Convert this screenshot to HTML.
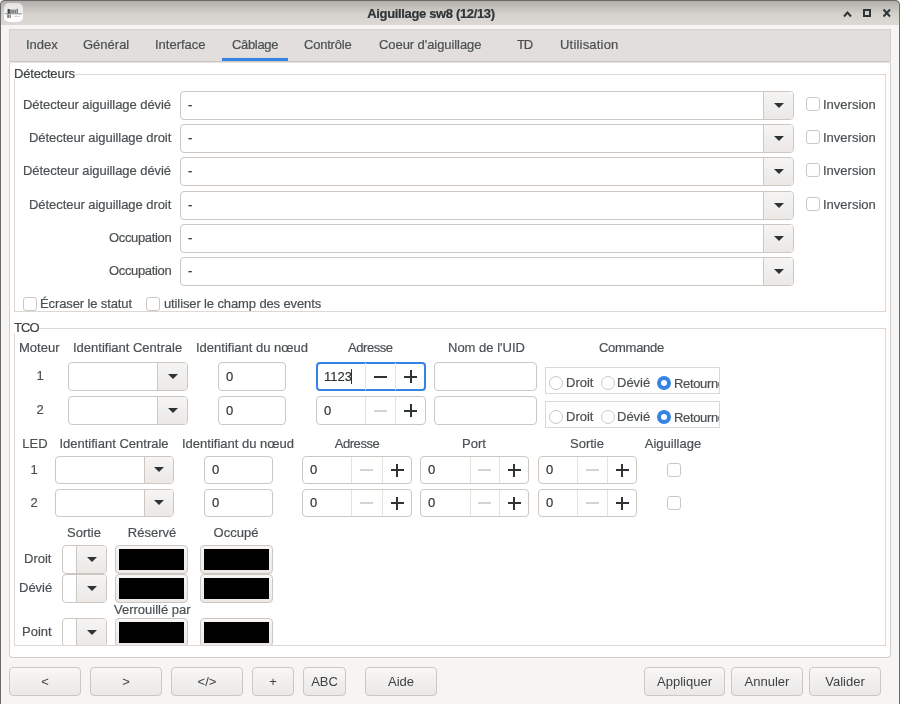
<!DOCTYPE html>
<html><head><meta charset="utf-8">
<style>
*{box-sizing:border-box;margin:0;padding:0}
html,body{width:900px;height:704px;overflow:hidden;background:#f6f5f4;font-family:"Liberation Sans",sans-serif;position:relative}
.a{position:absolute}
.t{position:absolute;white-space:nowrap;font-size:13px;line-height:16px;color:#3d4244;will-change:transform;-webkit-text-stroke:0.2px}
.gb{position:absolute;border:1px solid #ddd8d4}
.gbl{position:absolute;background:#fff;font-size:13px;will-change:transform;line-height:16px;color:#3d4244;white-space:nowrap}
.combo{position:absolute;background:#fff;border:1px solid #cdc7c2;border-radius:4px;overflow:hidden}
.combo .btn{position:absolute;right:0;top:0;bottom:0;border-left:1px solid #cdc7c2;background:linear-gradient(#f6f5f4,#ebe8e6)}
.arr{position:absolute;left:50%;top:50%;width:0;height:0;margin-left:-5px;margin-top:-3px;border-left:5px solid transparent;border-right:5px solid transparent;border-top:5px solid #2e3436}
.tf{position:absolute;background:#fff;border:1px solid #cdc7c2;border-radius:4px}
.cb{position:absolute;background:#fff;border:1px solid #cdc7c2;border-radius:3px}
.spin{position:absolute;background:#fff;border:1px solid #cdc7c2;border-radius:4px}
.btnb{position:absolute;border:1px solid #cdc7c2;border-radius:4px;background:linear-gradient(#f8f7f6,#ebe8e6);font-size:13px;will-change:transform;color:#3d4244;text-align:center;line-height:27px;white-space:nowrap}
.blk{position:absolute;border:1px solid #cdc7c2;border-radius:4px;background:linear-gradient(#f8f7f6,#ebe8e6)}
.blk i{position:absolute;left:3px;top:3px;right:3px;bottom:3px;background:#000}
</style></head><body>

<div class="a" style="left:0;top:0;width:900px;height:25px;background:linear-gradient(#b1aeaa 1px,#d5d2ce 14px,#dcd9d5 25px);border-radius:5px 5px 0 0"></div>
<div class="a" style="left:0;top:0;width:900px;height:704px;border:1px solid #6b6865;border-bottom:none;border-radius:5px 5px 0 0"></div>
<div class="a" style="left:4px;top:3px;width:19px;height:19px;border-radius:5px;background:linear-gradient(#e2e2e2,#f2f2f2 55%,#fff 58%)"></div>
<svg class="a" style="left:0;top:0" width="30" height="30" viewBox="0 0 30 30"><g fill="#222"><rect x="7.6" y="9" width="2.2" height="4.6" opacity="0.85"/><rect x="10.2" y="9.6" width="1.6" height="3.6" opacity="0.6"/><rect x="12.2" y="9.6" width="1.8" height="3.6" opacity="0.55"/><rect x="14.4" y="9.6" width="1.8" height="3.6" opacity="0.55"/><rect x="16.6" y="8.8" width="1.3" height="4.4" opacity="0.6"/><rect x="4.6" y="13.4" width="17.6" height="0.9" opacity="0.55"/><rect x="7.4" y="14.6" width="1.3" height="3.4" opacity="0.8"/><rect x="9.6" y="14.6" width="1.1" height="3.4" opacity="0.7"/><rect x="13.8" y="15.9" width="6" height="0.7" opacity="0.3"/></g></svg>
<div class="t" style="left:231px;width:400px;text-align:center;top:5.5px;font-size:13px;color:#2e3436;font-weight:bold;letter-spacing:-0.35px">Aiguillage sw8 (12/13)</div>
<svg class="a" style="left:840px;top:6px" width="54" height="14" viewBox="0 0 54 14"><path d="M4 10.5 L7.5 6.5 L11 10.5" fill="none" stroke="#2e3436" stroke-width="2"/><rect x="24" y="4" width="6" height="6" fill="none" stroke="#2e3436" stroke-width="2"/><path d="M43.5 3.5 L50 10.5 M50 3.5 L43.5 10.5" fill="none" stroke="#2e3436" stroke-width="2"/></svg>
<div class="a" style="left:9px;top:29px;width:882px;height:33px;background:#e1dedb;border:1px solid #d5d0cc;border-bottom-color:#cdc7c2"></div>
<div class="t" style="left:25.9px;top:36.5px;font-size:13px;color:#4b5053;font-weight:normal;letter-spacing:0px">Index</div>
<div class="t" style="left:83.4px;top:36.5px;font-size:13px;color:#4b5053;font-weight:normal;letter-spacing:0px">Général</div>
<div class="t" style="left:154.9px;top:36.5px;font-size:13px;color:#4b5053;font-weight:normal;letter-spacing:0px">Interface</div>
<div class="t" style="left:231.9px;top:36.5px;font-size:13px;color:#4b5053;font-weight:normal;letter-spacing:-0.33px">Câblage</div>
<div class="t" style="left:304.4px;top:36.5px;font-size:13px;color:#4b5053;font-weight:normal;letter-spacing:-0.21px">Contrôle</div>
<div class="t" style="left:378.7px;top:36.5px;font-size:13px;color:#4b5053;font-weight:normal;letter-spacing:-0.07px">Coeur d'aiguillage</div>
<div class="t" style="left:517.1px;top:36.5px;font-size:13px;color:#4b5053;font-weight:normal;letter-spacing:-1.2px">TD</div>
<div class="t" style="left:560.1px;top:36.5px;font-size:13px;color:#4b5053;font-weight:normal;letter-spacing:0.2px">Utilisation</div>
<div class="a" style="left:222px;top:58px;width:66px;height:3px;background:#3584e4"></div>
<div class="a" style="left:9px;top:62px;width:882px;height:596px;background:#fff;border:1px solid #d3cec9;border-top-color:#e6e2de;border-radius:3px 3px 4px 4px"></div>
<div class="gb" style="left:14px;top:74px;width:872px;height:238px"></div>
<div class="a" style="left:13px;top:66px;height:13px;background:#fff;overflow:visible"><div class="t" style="position:relative;left:0.9px;top:0;letter-spacing:-0.2px;padding-right:1px">Détecteurs</div></div>
<div class="combo" style="left:180px;top:91px;width:614px;height:29px"><div class="btn" style="width:30px"><div class="arr"></div></div></div>
<div class="t" style="left:188.4px;top:97.0px;font-size:13px;color:#2e3436;font-weight:normal;">-</div>
<div class="t" style="right:729px;top:96.5px;font-size:13px;color:#4b5053;font-weight:normal;letter-spacing:-0.06px">Détecteur aiguillage dévié</div>
<div class="cb" style="left:806px;top:97px;width:14px;height:14px"></div>
<div class="t" style="left:822.9px;top:96.5px;font-size:13px;color:#4b5053;font-weight:normal;">Inversion</div>
<div class="combo" style="left:180px;top:124px;width:614px;height:29px"><div class="btn" style="width:30px"><div class="arr"></div></div></div>
<div class="t" style="left:188.4px;top:130.0px;font-size:13px;color:#2e3436;font-weight:normal;">-</div>
<div class="t" style="right:729px;top:129.5px;font-size:13px;color:#4b5053;font-weight:normal;letter-spacing:-0.06px">Détecteur aiguillage droit</div>
<div class="cb" style="left:806px;top:130px;width:14px;height:14px"></div>
<div class="t" style="left:822.9px;top:129.5px;font-size:13px;color:#4b5053;font-weight:normal;">Inversion</div>
<div class="combo" style="left:180px;top:157px;width:614px;height:29px"><div class="btn" style="width:30px"><div class="arr"></div></div></div>
<div class="t" style="left:188.4px;top:163.0px;font-size:13px;color:#2e3436;font-weight:normal;">-</div>
<div class="t" style="right:729px;top:162.5px;font-size:13px;color:#4b5053;font-weight:normal;letter-spacing:-0.06px">Détecteur aiguillage dévié</div>
<div class="cb" style="left:806px;top:163px;width:14px;height:14px"></div>
<div class="t" style="left:822.9px;top:162.5px;font-size:13px;color:#4b5053;font-weight:normal;">Inversion</div>
<div class="combo" style="left:180px;top:191px;width:614px;height:29px"><div class="btn" style="width:30px"><div class="arr"></div></div></div>
<div class="t" style="left:188.4px;top:197.0px;font-size:13px;color:#2e3436;font-weight:normal;">-</div>
<div class="t" style="right:729px;top:196.5px;font-size:13px;color:#4b5053;font-weight:normal;letter-spacing:-0.06px">Détecteur aiguillage droit</div>
<div class="cb" style="left:806px;top:197px;width:14px;height:14px"></div>
<div class="t" style="left:822.9px;top:196.5px;font-size:13px;color:#4b5053;font-weight:normal;">Inversion</div>
<div class="combo" style="left:180px;top:224px;width:614px;height:29px"><div class="btn" style="width:30px"><div class="arr"></div></div></div>
<div class="t" style="left:188.4px;top:230.0px;font-size:13px;color:#2e3436;font-weight:normal;">-</div>
<div class="t" style="right:729px;top:229.5px;font-size:13px;color:#4b5053;font-weight:normal;letter-spacing:-0.35px">Occupation</div>
<div class="combo" style="left:180px;top:257px;width:614px;height:29px"><div class="btn" style="width:30px"><div class="arr"></div></div></div>
<div class="t" style="left:188.4px;top:263.0px;font-size:13px;color:#2e3436;font-weight:normal;">-</div>
<div class="t" style="right:729px;top:262.5px;font-size:13px;color:#4b5053;font-weight:normal;letter-spacing:-0.35px">Occupation</div>
<div class="cb" style="left:23px;top:297px;width:14px;height:14px"></div>
<div class="t" style="left:40.4px;top:296.0px;font-size:13px;color:#4b5053;font-weight:normal;letter-spacing:-0.12px">Écraser le statut</div>
<div class="cb" style="left:146px;top:297px;width:14px;height:14px"></div>
<div class="t" style="left:163.6px;top:296.0px;font-size:13px;color:#4b5053;font-weight:normal;letter-spacing:-0.12px">utiliser le champ des events</div>
<div class="gb" style="left:14px;top:328px;width:872px;height:318px"></div>
<div class="a" style="left:13px;top:320px;height:13px;background:#fff;overflow:visible"><div class="t" style="position:relative;left:1.4px;top:0;letter-spacing:-0.9px;padding-right:1px">TCO</div></div>
<div class="t" style="left:19.0px;top:339.5px;font-size:13px;color:#4b5053;font-weight:normal;letter-spacing:0px">Moteur</div>
<div class="t" style="left:73.10000000000001px;top:339.5px;font-size:13px;color:#4b5053;font-weight:normal;letter-spacing:0px">Identifiant Centrale</div>
<div class="t" style="left:196.1px;top:339.5px;font-size:13px;color:#4b5053;font-weight:normal;letter-spacing:0px">Identifiant du nœud</div>
<div class="t" style="left:347.7px;top:339.5px;font-size:13px;color:#4b5053;font-weight:normal;letter-spacing:-0.45px">Adresse</div>
<div class="t" style="left:447.7px;top:339.5px;font-size:13px;color:#4b5053;font-weight:normal;letter-spacing:0px">Nom de l'UID</div>
<div class="t" style="left:599.4px;top:339.5px;font-size:13px;color:#4b5053;font-weight:normal;letter-spacing:-0.28px">Commande</div>
<div class="t" style="left:-160.5px;width:400px;text-align:center;top:367.5px;font-size:13px;color:#4b5053;font-weight:normal;">1</div>
<div class="combo" style="left:68px;top:362px;width:120px;height:29px"><div class="btn" style="width:30px"><div class="arr"></div></div></div>
<div class="tf" style="left:218px;top:362px;width:68px;height:29px"></div>
<div class="t" style="left:226.4px;top:368.5px;font-size:13px;color:#2e3436;font-weight:normal;">0</div>
<div class="spin" style="left:316px;top:362px;width:110px;height:29px;border:2px solid #3584e4;"></div>
<div class="a" style="left:365px;top:363px;width:1px;height:27px;background:#e6e2de"></div>
<div class="a" style="left:395px;top:363px;width:1px;height:27px;background:#e6e2de"></div>
<div class="a" style="left:373.5px;top:375.5px;width:13px;height:2px;background:#2e3436"></div>
<div class="a" style="left:404.0px;top:375.5px;width:13px;height:2px;background:#2e3436"></div>
<div class="a" style="left:409.5px;top:370.0px;width:2px;height:13px;background:#2e3436"></div>
<div class="t" style="left:324.4px;top:368.5px;font-size:13px;color:#2e3436;font-weight:normal;">1123</div>
<div class="tf" style="left:434px;top:362px;width:103px;height:29px"></div>
<div class="a" style="left:545px;top:367px;width:175px;height:27px;border:1px solid #ddd8d4;overflow:hidden"></div>
<div class="a" style="left:549px;top:376px;width:14px;height:14px;border-radius:50%;border:1px solid #cdc7c2;background:#fff"></div>
<div class="t" style="left:565.6px;top:375.0px;font-size:13px;color:#4b5053;font-weight:normal;">Droit</div>
<div class="a" style="left:601px;top:376px;width:14px;height:14px;border-radius:50%;border:1px solid #cdc7c2;background:#fff"></div>
<div class="t" style="left:617.4px;top:375.0px;font-size:13px;color:#4b5053;font-weight:normal;">Dévié</div>
<div class="a" style="left:657px;top:376px;width:14px;height:14px;border-radius:50%;border:4px solid #3584e4;background:#fff"></div>
<div class="a" style="left:674px;top:367px;width:45px;height:27px;overflow:hidden"><div class="t" style="left:0;top:8.5px;color:#4b5053;letter-spacing:-0.35px">Retourné</div></div>
<div class="t" style="left:-160.5px;width:400px;text-align:center;top:401.5px;font-size:13px;color:#4b5053;font-weight:normal;">2</div>
<div class="combo" style="left:68px;top:396px;width:120px;height:29px"><div class="btn" style="width:30px"><div class="arr"></div></div></div>
<div class="tf" style="left:218px;top:396px;width:68px;height:29px"></div>
<div class="t" style="left:226.4px;top:402.5px;font-size:13px;color:#2e3436;font-weight:normal;">0</div>
<div class="spin" style="left:316px;top:396px;width:110px;height:29px;"></div>
<div class="a" style="left:365px;top:397px;width:1px;height:27px;background:#e6e2de"></div>
<div class="a" style="left:395px;top:397px;width:1px;height:27px;background:#e6e2de"></div>
<div class="a" style="left:373.5px;top:409.5px;width:13px;height:2px;background:#d6d3d0"></div>
<div class="a" style="left:404.0px;top:409.5px;width:13px;height:2px;background:#2e3436"></div>
<div class="a" style="left:409.5px;top:404.0px;width:2px;height:13px;background:#2e3436"></div>
<div class="t" style="left:324.4px;top:402.5px;font-size:13px;color:#2e3436;font-weight:normal;">0</div>
<div class="tf" style="left:434px;top:396px;width:103px;height:29px"></div>
<div class="a" style="left:545px;top:401px;width:175px;height:27px;border:1px solid #ddd8d4;overflow:hidden"></div>
<div class="a" style="left:549px;top:410px;width:14px;height:14px;border-radius:50%;border:1px solid #cdc7c2;background:#fff"></div>
<div class="t" style="left:565.6px;top:409.0px;font-size:13px;color:#4b5053;font-weight:normal;">Droit</div>
<div class="a" style="left:601px;top:410px;width:14px;height:14px;border-radius:50%;border:1px solid #cdc7c2;background:#fff"></div>
<div class="t" style="left:617.4px;top:409.0px;font-size:13px;color:#4b5053;font-weight:normal;">Dévié</div>
<div class="a" style="left:657px;top:410px;width:14px;height:14px;border-radius:50%;border:4px solid #3584e4;background:#fff"></div>
<div class="a" style="left:674px;top:401px;width:45px;height:27px;overflow:hidden"><div class="t" style="left:0;top:8.5px;color:#4b5053;letter-spacing:-0.35px">Retourné</div></div>
<div class="a" style="left:351px;top:369px;width:1px;height:15px;background:#2e3436"></div>
<div class="t" style="left:-165.5px;width:400px;text-align:center;top:435.5px;font-size:13px;color:#4b5053;font-weight:normal;letter-spacing:0px">LED</div>
<div class="t" style="left:-86.5px;width:400px;text-align:center;top:435.5px;font-size:13px;color:#4b5053;font-weight:normal;letter-spacing:0px">Identifiant Centrale</div>
<div class="t" style="left:38px;width:400px;text-align:center;top:435.5px;font-size:13px;color:#4b5053;font-weight:normal;letter-spacing:0px">Identifiant du nœud</div>
<div class="t" style="left:156.89999999999998px;width:400px;text-align:center;top:435.5px;font-size:13px;color:#4b5053;font-weight:normal;letter-spacing:-0.45px">Adresse</div>
<div class="t" style="left:274px;width:400px;text-align:center;top:435.5px;font-size:13px;color:#4b5053;font-weight:normal;letter-spacing:0px">Port</div>
<div class="t" style="left:387px;width:400px;text-align:center;top:435.5px;font-size:13px;color:#4b5053;font-weight:normal;letter-spacing:0px">Sortie</div>
<div class="t" style="left:473.20000000000005px;width:400px;text-align:center;top:435.5px;font-size:13px;color:#4b5053;font-weight:normal;letter-spacing:0px">Aiguillage</div>
<div class="t" style="left:-166px;width:400px;text-align:center;top:462.0px;font-size:13px;color:#4b5053;font-weight:normal;">1</div>
<div class="combo" style="left:55px;top:456px;width:119px;height:28px"><div class="btn" style="width:29px"><div class="arr"></div></div></div>
<div class="tf" style="left:204px;top:456px;width:69px;height:28px"></div>
<div class="t" style="left:212.4px;top:462.0px;font-size:13px;color:#2e3436;font-weight:normal;">0</div>
<div class="spin" style="left:302px;top:456px;width:110px;height:28px;"></div>
<div class="a" style="left:351px;top:457px;width:1px;height:26px;background:#e6e2de"></div>
<div class="a" style="left:382px;top:457px;width:1px;height:26px;background:#e6e2de"></div>
<div class="a" style="left:360.0px;top:469.0px;width:13px;height:2px;background:#d6d3d0"></div>
<div class="a" style="left:390.5px;top:469.0px;width:13px;height:2px;background:#2e3436"></div>
<div class="a" style="left:396.0px;top:463.5px;width:2px;height:13px;background:#2e3436"></div>
<div class="t" style="left:310.4px;top:462.0px;font-size:13px;color:#2e3436;font-weight:normal;">0</div>
<div class="spin" style="left:420px;top:456px;width:109px;height:28px;"></div>
<div class="a" style="left:470px;top:457px;width:1px;height:26px;background:#e6e2de"></div>
<div class="a" style="left:499px;top:457px;width:1px;height:26px;background:#e6e2de"></div>
<div class="a" style="left:478.0px;top:469.0px;width:13px;height:2px;background:#d6d3d0"></div>
<div class="a" style="left:507.5px;top:469.0px;width:13px;height:2px;background:#2e3436"></div>
<div class="a" style="left:513.0px;top:463.5px;width:2px;height:13px;background:#2e3436"></div>
<div class="t" style="left:428.4px;top:462.0px;font-size:13px;color:#2e3436;font-weight:normal;">0</div>
<div class="spin" style="left:538px;top:456px;width:99px;height:28px;"></div>
<div class="a" style="left:577px;top:457px;width:1px;height:26px;background:#e6e2de"></div>
<div class="a" style="left:607px;top:457px;width:1px;height:26px;background:#e6e2de"></div>
<div class="a" style="left:585.5px;top:469.0px;width:13px;height:2px;background:#d6d3d0"></div>
<div class="a" style="left:615.5px;top:469.0px;width:13px;height:2px;background:#2e3436"></div>
<div class="a" style="left:621.0px;top:463.5px;width:2px;height:13px;background:#2e3436"></div>
<div class="t" style="left:546.4px;top:462.0px;font-size:13px;color:#2e3436;font-weight:normal;">0</div>
<div class="cb" style="left:667px;top:463px;width:14px;height:14px"></div>
<div class="t" style="left:-166px;width:400px;text-align:center;top:495.0px;font-size:13px;color:#4b5053;font-weight:normal;">2</div>
<div class="combo" style="left:55px;top:489px;width:119px;height:28px"><div class="btn" style="width:29px"><div class="arr"></div></div></div>
<div class="tf" style="left:204px;top:489px;width:69px;height:28px"></div>
<div class="t" style="left:212.4px;top:495.0px;font-size:13px;color:#2e3436;font-weight:normal;">0</div>
<div class="spin" style="left:302px;top:489px;width:110px;height:28px;"></div>
<div class="a" style="left:351px;top:490px;width:1px;height:26px;background:#e6e2de"></div>
<div class="a" style="left:382px;top:490px;width:1px;height:26px;background:#e6e2de"></div>
<div class="a" style="left:360.0px;top:502.0px;width:13px;height:2px;background:#d6d3d0"></div>
<div class="a" style="left:390.5px;top:502.0px;width:13px;height:2px;background:#2e3436"></div>
<div class="a" style="left:396.0px;top:496.5px;width:2px;height:13px;background:#2e3436"></div>
<div class="t" style="left:310.4px;top:495.0px;font-size:13px;color:#2e3436;font-weight:normal;">0</div>
<div class="spin" style="left:420px;top:489px;width:109px;height:28px;"></div>
<div class="a" style="left:470px;top:490px;width:1px;height:26px;background:#e6e2de"></div>
<div class="a" style="left:499px;top:490px;width:1px;height:26px;background:#e6e2de"></div>
<div class="a" style="left:478.0px;top:502.0px;width:13px;height:2px;background:#d6d3d0"></div>
<div class="a" style="left:507.5px;top:502.0px;width:13px;height:2px;background:#2e3436"></div>
<div class="a" style="left:513.0px;top:496.5px;width:2px;height:13px;background:#2e3436"></div>
<div class="t" style="left:428.4px;top:495.0px;font-size:13px;color:#2e3436;font-weight:normal;">0</div>
<div class="spin" style="left:538px;top:489px;width:99px;height:28px;"></div>
<div class="a" style="left:577px;top:490px;width:1px;height:26px;background:#e6e2de"></div>
<div class="a" style="left:607px;top:490px;width:1px;height:26px;background:#e6e2de"></div>
<div class="a" style="left:585.5px;top:502.0px;width:13px;height:2px;background:#d6d3d0"></div>
<div class="a" style="left:615.5px;top:502.0px;width:13px;height:2px;background:#2e3436"></div>
<div class="a" style="left:621.0px;top:496.5px;width:2px;height:13px;background:#2e3436"></div>
<div class="t" style="left:546.4px;top:495.0px;font-size:13px;color:#2e3436;font-weight:normal;">0</div>
<div class="cb" style="left:667px;top:496px;width:14px;height:14px"></div>
<div class="t" style="left:-116px;width:400px;text-align:center;top:525.0px;font-size:13px;color:#4b5053;font-weight:normal;">Sortie</div>
<div class="t" style="left:-47.69999999999999px;width:400px;text-align:center;top:525.0px;font-size:13px;color:#4b5053;font-weight:normal;">Réservé</div>
<div class="t" style="left:36px;width:400px;text-align:center;top:525.0px;font-size:13px;color:#4b5053;font-weight:normal;">Occupé</div>
<div class="t" style="right:848.3px;top:551.0px;font-size:13px;color:#4b5053;font-weight:normal;">Droit</div>
<div class="t" style="right:848px;top:580.3px;font-size:13px;color:#4b5053;font-weight:normal;">Dévié</div>
<div class="t" style="right:709.3px;top:602.0px;font-size:13px;color:#4b5053;font-weight:normal;">Verrouillé par</div>
<div class="t" style="right:848px;top:623.7px;font-size:13px;color:#4b5053;font-weight:normal;">Point</div>
<div class="combo" style="left:62px;top:545px;width:45px;height:29px"><div class="btn" style="width:30px"><div class="arr"></div></div></div>
<div class="blk" style="left:115px;top:545px;width:73px;height:29px"><i></i></div>
<div class="blk" style="left:200px;top:545px;width:73px;height:29px"><i></i></div>
<div class="combo" style="left:62px;top:574px;width:45px;height:29px"><div class="btn" style="width:30px"><div class="arr"></div></div></div>
<div class="blk" style="left:115px;top:574px;width:73px;height:29px"><i></i></div>
<div class="blk" style="left:200px;top:574px;width:73px;height:29px"><i></i></div>
<div class="combo" style="left:62px;top:618px;width:45px;height:29px"><div class="btn" style="width:30px"><div class="arr"></div></div></div>
<div class="blk" style="left:115px;top:618px;width:73px;height:29px"><i></i></div>
<div class="blk" style="left:200px;top:618px;width:73px;height:29px"><i></i></div>
<div class="a" style="left:15px;top:646px;width:870px;height:11px;background:#fff"></div>
<div class="a" style="left:14px;top:645px;width:872px;height:1px;background:#ddd8d4"></div>
<div class="btnb" style="left:9px;top:667px;width:72px;height:29px">&lt;</div>
<div class="btnb" style="left:90px;top:667px;width:72px;height:29px">&gt;</div>
<div class="btnb" style="left:171px;top:667px;width:72px;height:29px">&lt;/&gt;</div>
<div class="btnb" style="left:252px;top:667px;width:42px;height:29px">+</div>
<div class="btnb" style="left:303px;top:667px;width:43px;height:29px">ABC</div>
<div class="btnb" style="left:365px;top:667px;width:72px;height:29px">Aide</div>
<div class="btnb" style="left:644px;top:667px;width:81px;height:29px">Appliquer</div>
<div class="btnb" style="left:731px;top:667px;width:72px;height:29px">Annuler</div>
<div class="btnb" style="left:809px;top:667px;width:72px;height:29px">Valider</div>
</body></html>
